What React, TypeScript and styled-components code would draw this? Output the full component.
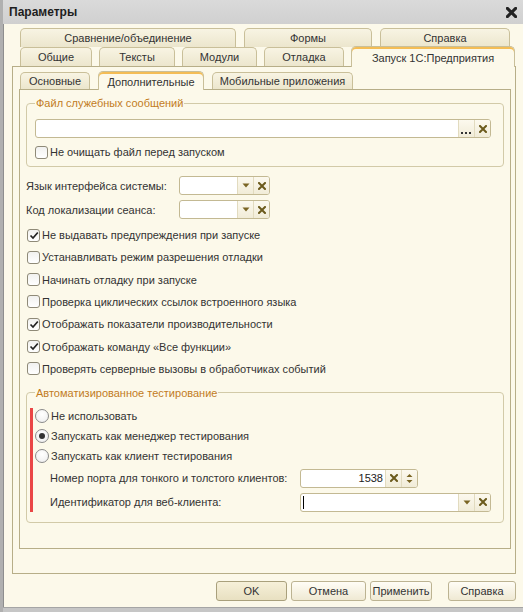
import styled, { createGlobalStyle } from "styled-components";

const GlobalStyle = createGlobalStyle`
  html, body { margin: 0; padding: 0; }
  body {
    font-family: "Liberation Sans", Arial, sans-serif;
    font-size: 11px;
    color: #333;
    background: #fcf9ea;
  }
`;

const Window = styled.div`
  box-sizing: border-box;
  width: 523px;
  height: 612px;
  display: flex;
  flex-direction: column;
  background: #fcf9ea;
  border-left: 3px solid #b0b0b0;
  box-shadow: inset 1px 0 0 #8e8e8e;
  overflow: hidden;
`;

const TitleBar = styled.div`
  height: 24px;
  flex-shrink: 0;
  display: flex;
  align-items: center;
  justify-content: space-between;
  padding: 0 6px;
  background: linear-gradient(#dadada, #d0d0d0);
`;

const Title = styled.div`
  font-weight: bold;
  font-size: 12px;
  color: #1e1e1e;
`;

const Body = styled.div`
  flex: 1;
  display: flex;
  flex-direction: column;
  padding: 4px 7px 0 9px;
`;

const TabRow = styled.div<{ $h: number; $pad: number; $gap: number }>`
  display: flex;
  flex-shrink: 0;
  align-items: flex-end;
  height: ${(p) => p.$h}px;
  padding-left: ${(p) => p.$pad}px;
  gap: ${(p) => p.$gap}px;
`;

const Tab = styled.div<{ $w: number; $h: number; $active?: boolean }>`
  position: relative;
  box-sizing: border-box;
  width: ${(p) => p.$w}px;
  height: ${(p) => (p.$active ? p.$h + 2 : p.$h)}px;
  margin-bottom: ${(p) => (p.$active ? -1 : 0)}px;
  z-index: ${(p) => (p.$active ? 2 : 1)};
  display: flex;
  align-items: center;
  justify-content: center;
  border: 1px solid #c9bf99;
  border-bottom: none;
  border-radius: 5px 5px 0 0;
  background: ${(p) =>
    p.$active ? "#fcf9ea" : "linear-gradient(#f8f4e3, #ece6cd)"};
  box-shadow: ${(p) => (p.$active ? "inset 0 2px 0 #f4bd55" : "none")};
  color: #333;
  white-space: nowrap;
  padding-top: ${(p) => (p.$active ? 1 : 0)}px;
`;

const Panel = styled.div<{ $h: number; $pad: string }>`
  box-sizing: border-box;
  flex-shrink: 0;
  height: ${(p) => p.$h}px;
  border: 1px solid #b7ae88;
  padding: ${(p) => p.$pad};
  display: flex;
  flex-direction: column;
`;

const Group = styled.fieldset<{ $mt: number }>`
  flex-shrink: 0;
  margin: ${(p) => p.$mt}px 0 0 0;
  padding: 0 3px;
  min-width: 0;
  border: 1px solid #d2caa8;
  border-radius: 4px;
`;

const Legend = styled.legend`
  padding: 0 1px;
  margin-left: 5px;
  line-height: 14px;
  color: #c27c1e;
`;

const GroupBody = styled.div<{ $pad: string }>`
  padding: ${(p) => p.$pad};
  display: flex;
  flex-direction: column;
`;

const Row = styled.div<{ $mt?: number; $h?: number; $pl?: number }>`
  display: flex;
  flex-shrink: 0;
  align-items: center;
  height: ${(p) => p.$h ?? 19}px;
  margin-top: ${(p) => p.$mt ?? 0}px;
  padding-left: ${(p) => p.$pl ?? 0}px;
  white-space: nowrap;
`;

const Label = styled.span<{ $w: number }>`
  width: ${(p) => p.$w}px;
  flex-shrink: 0;
`;

const Field = styled.div<{ $w: number }>`
  box-sizing: border-box;
  width: ${(p) => p.$w}px;
  height: 19px;
  display: flex;
  border: 1px solid #c3b993;
  border-radius: 3px;
  background: #fff;
  overflow: hidden;
`;

const FieldText = styled.div<{ $right?: boolean }>`
  flex: 1;
  display: flex;
  align-items: center;
  justify-content: ${(p) => (p.$right ? "flex-end" : "flex-start")};
  padding: 0 2px;
  color: #222;
`;

const Caret = styled.span`
  width: 1px;
  height: 13px;
  background: #000;
`;

const FieldButton = styled.span`
  width: 15px;
  display: flex;
  align-items: center;
  justify-content: center;
  background: linear-gradient(#fcf9ee, #f1ecd8);
  border-left: 1px solid #e2dbbf;
`;

const CheckList = styled.div`
  display: flex;
  flex-direction: column;
  flex-shrink: 0;
  gap: 4.33px;
  margin-top: 7px;
  padding-left: 1px;
`;

const CheckRow = styled.label`
  display: flex;
  align-items: center;
  height: 18px;
  gap: 2px;
  white-space: nowrap;
`;

const Box = styled.span`
  box-sizing: border-box;
  width: 13px;
  height: 13px;
  flex-shrink: 0;
  border: 1px solid #8f8a78;
  border-radius: 3px;
  background: linear-gradient(#f1f1ef, #ffffff);
  display: flex;
  align-items: center;
  justify-content: center;
`;

const TestArea = styled.div`
  border-left: 3px solid #ea4646;
  padding: 0 0 0 2px;
  display: flex;
  flex-direction: column;
`;

const RadioList = styled.div`
  display: flex;
  flex-direction: column;
  gap: 4px;
`;

const RadioRow = styled.label`
  display: flex;
  align-items: center;
  height: 16px;
  gap: 2px;
  white-space: nowrap;
`;

const Circle = styled.span`
  box-sizing: border-box;
  width: 14px;
  height: 14px;
  flex-shrink: 0;
  border: 1px solid #8a8a8a;
  border-radius: 50%;
  background: radial-gradient(circle at 50% 35%, #ffffff, #ececec);
  display: flex;
  align-items: center;
  justify-content: center;
`;

const Dot = styled.span`
  width: 6px;
  height: 6px;
  border-radius: 50%;
  background: #333;
`;

const ButtonRow = styled.div`
  display: flex;
  flex-shrink: 0;
  justify-content: flex-end;
  gap: 4px;
  margin-top: 7px;
  height: 20px;
`;

const Button = styled.button<{ $w: number; $default?: boolean; $spaced?: boolean }>`
  box-sizing: border-box;
  width: ${(p) => p.$w}px;
  height: 20px;
  margin-left: ${(p) => (p.$spaced ? 12 : 0)}px;
  padding: 0;
  font-family: inherit;
  font-size: 11px;
  color: #333;
  border: 1px solid ${(p) => (p.$default ? "#a9a07c" : "#bcb392")};
  border-radius: 3px;
  background: ${(p) =>
    p.$default
      ? "linear-gradient(#f6f0d9, #e8e0c1)"
      : "linear-gradient(#fffdf6, #efe9d3)"};
`;

const BottomEdge = styled.div`
  height: 5px;
  flex-shrink: 0;
  margin-top: 6px;
  background: #c6c6c6;
  border-top: 1px solid #a5a5a5;
`;

const XIcon = ({ size = 8, color = "#6b5a1c", w = 2 }: { size?: number; color?: string; w?: number }) => (
  <svg width={size} height={size} viewBox="0 0 8 8">
    <path d="M1 1 L7 7 M7 1 L1 7" stroke={color} strokeWidth={w} strokeLinecap="square" />
  </svg>
);

const Arrow = () => (
  <svg width="8" height="5" viewBox="0 0 8 5">
    <path d="M0.5 0.5 H7.5 L4 4.5 Z" fill="#7a6524" />
  </svg>
);

const Spin = () => (
  <svg width="7" height="11" viewBox="0 0 7 11">
    <path d="M0.5 4 L3.5 1 L6.5 4 Z M0.5 7 L3.5 10 L6.5 7 Z" fill="#7a6524" />
  </svg>
);

const Ellipsis = () => (
  <svg width="11" height="12" viewBox="0 0 11 12">
    <rect x="0" y="9" width="2" height="2" fill="#333" />
    <rect x="4" y="9" width="2" height="2" fill="#333" />
    <rect x="8" y="9" width="2" height="2" fill="#333" />
  </svg>
);

const Check = () => (
  <svg width="10" height="9" viewBox="0 0 10 9">
    <path d="M1.5 4.5 L4 7 L8.8 1.5" stroke="#222" strokeWidth="1.7" fill="none" />
  </svg>
);

const CheckBox = ({ label, checked }: { label: string; checked?: boolean }) => (
  <CheckRow>
    <Box>{checked && <Check />}</Box>
    {label}
  </CheckRow>
);

const Radio = ({ label, checked }: { label: string; checked?: boolean }) => (
  <RadioRow>
    <Circle>{checked && <Dot />}</Circle>
    {label}
  </RadioRow>
);

const options = [
  { label: "Не выдавать предупреждения при запуске", checked: true },
  { label: "Устанавливать режим разрешения отладки" },
  { label: "Начинать отладку при запуске" },
  { label: "Проверка циклических ссылок встроенного языка" },
  { label: "Отображать показатели производительности", checked: true },
  { label: "Отображать команду «Все функции»", checked: true },
  { label: "Проверять серверные вызовы в обработчиках событий" },
];

export default function App() {
  return (
    <>
      <GlobalStyle />
      <Window>
        <TitleBar>
          <Title>Параметры</Title>
          <XIcon size={11} color="#222" w={2.2} />
        </TitleBar>
        <Body>
          <TabRow $h={19} $pad={8} $gap={8}>
            <Tab $w={216} $h={19}>Сравнение/объединение</Tab>
            <Tab $w={128} $h={19}>Формы</Tab>
            <Tab $w={130} $h={19}>Справка</Tab>
          </TabRow>
          <TabRow $h={19} $pad={8} $gap={7}>
            <Tab $w={72} $h={19}>Общие</Tab>
            <Tab $w={76} $h={19}>Тексты</Tab>
            <Tab $w={75} $h={19}>Модули</Tab>
            <Tab $w={80} $h={19}>Отладка</Tab>
            <Tab $w={164} $h={19} $active>Запуск 1С:Предприятия</Tab>
          </TabRow>
          <Panel $h={508} $pad="3px 4px 0 6px">
            <TabRow $h={19} $pad={1} $gap={8}>
              <Tab $w={70} $h={17}>Основные</Tab>
              <Tab $w={106} $h={17} $active>Дополнительные</Tab>
              <Tab $w={141} $h={17}>Мобильные приложения</Tab>
            </TabRow>
            <Panel $h={460} $pad="0 6px 0 6px">
              <Group $mt={6}>
                <Legend>Файл служебных сообщений</Legend>
                <GroupBody $pad="9px 8px 5px 5px">
                  <Field $w={456}>
                    <FieldText />
                    <FieldButton><Ellipsis /></FieldButton>
                    <FieldButton><XIcon /></FieldButton>
                  </Field>
                  <Row $mt={5} $h={18}>
                    <CheckBox label="Не очищать файл перед запуском" />
                  </Row>
                </GroupBody>
              </Group>
              <Row $mt={9}>
                <Label $w={153}>Язык интерфейса системы:</Label>
                <Field $w={91}>
                  <FieldText />
                  <FieldButton><Arrow /></FieldButton>
                  <FieldButton><XIcon /></FieldButton>
                </Field>
              </Row>
              <Row $mt={5}>
                <Label $w={153}>Код локализации сеанса:</Label>
                <Field $w={91}>
                  <FieldText />
                  <FieldButton><Arrow /></FieldButton>
                  <FieldButton><XIcon /></FieldButton>
                </Field>
              </Row>
              <CheckList>
                {options.map((o) => (
                  <CheckBox key={o.label} label={o.label} checked={o.checked} />
                ))}
              </CheckList>
              <Group $mt={8}>
                <Legend>Автоматизированное тестирование</Legend>
                <GroupBody $pad="8px 0 10px 0">
                  <TestArea>
                    <RadioList>
                      <Radio label="Не использовать" />
                      <Radio label="Запускать как менеджер тестирования" checked />
                      <Radio label="Запускать как клиент тестирования" />
                    </RadioList>
                    <Row $mt={5} $pl={15}>
                      <Label $w={250}>Номер порта для тонкого и толстого клиентов:</Label>
                      <Field $w={118}>
                        <FieldText $right>1538</FieldText>
                        <FieldButton><XIcon /></FieldButton>
                        <FieldButton><Spin /></FieldButton>
                      </Field>
                    </Row>
                    <Row $mt={5} $pl={15}>
                      <Label $w={250}>Идентификатор для веб-клиента:</Label>
                      <Field $w={191}>
                        <FieldText><Caret /></FieldText>
                        <FieldButton><Arrow /></FieldButton>
                        <FieldButton><XIcon /></FieldButton>
                      </Field>
                    </Row>
                  </TestArea>
                </GroupBody>
              </Group>
            </Panel>
          </Panel>
          <ButtonRow>
            <Button $w={71} $default>OK</Button>
            <Button $w={75}>Отмена</Button>
            <Button $w={62}>Применить</Button>
            <Button $w={68} $spaced>Справка</Button>
          </ButtonRow>
        </Body>
        <BottomEdge />
      </Window>
    </>
  );
}
